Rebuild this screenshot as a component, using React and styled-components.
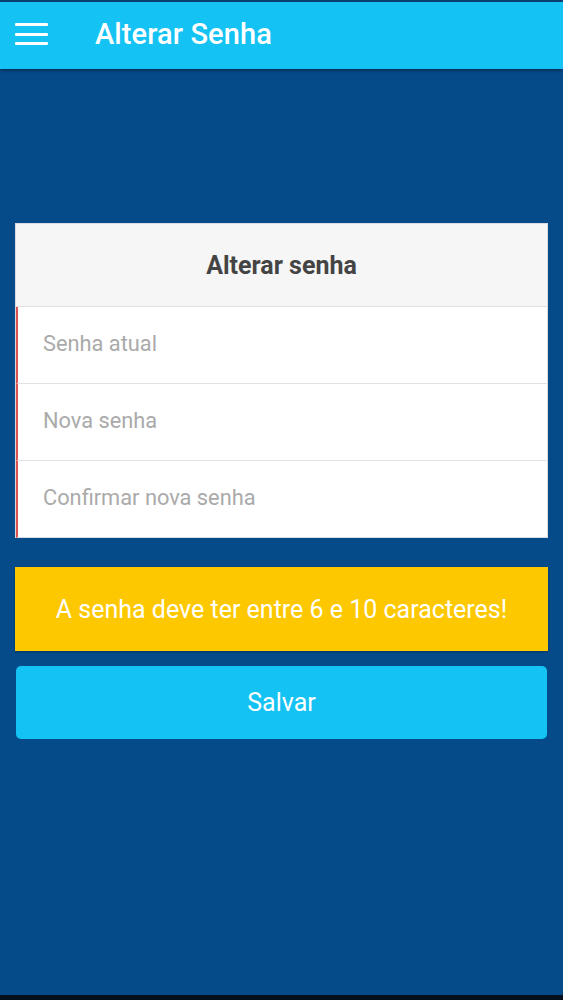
import React from "react";
import styled, { createGlobalStyle } from "styled-components";

const Global = createGlobalStyle`
  html, body { margin: 0; padding: 0; }
  body { font-family: Roboto, "Noto Sans", sans-serif; background: #000; }
  * { box-sizing: border-box; }
`;

const Screen = styled.div`
  width: 563px;
  height: 1000px;
  display: flex;
  flex-direction: column;
  background: #054b8a;
  border-top: 2px solid #0a3f6e;
  border-bottom: 5px solid #03101c;
`;

const Toolbar = styled.header`
  height: 67px;
  flex-shrink: 0;
  display: flex;
  align-items: center;
  padding: 0 15px 3px;
  background: #14c2f3;
  box-shadow: 0 2px 3px rgba(0, 0, 0, 0.35);
  gap: 47px;
`;

const MenuButton = styled.div`
  width: 33px;
  height: 22px;
  display: flex;
  flex-direction: column;
  justify-content: space-between;
`;

const MenuLine = styled.span`
  display: block;
  height: 3px;
  background: #fff;
  border-radius: 1px;
`;

const Title = styled.h1`
  margin: 0;
  color: #fff;
  font-size: 29px;
  font-weight: 500;
  letter-spacing: 0.1px;
`;

const Content = styled.main`
  padding: 154px 15px 0;
  display: flex;
  flex-direction: column;
`;

const Card = styled.section`
  background: #fff;
  border: 1px solid #d9dde2;
  border-bottom: none;
`;

const CardHeader = styled.div`
  height: 83px;
  display: flex;
  align-items: center;
  justify-content: center;
  background: #f6f6f6;
  border-bottom: 1px solid #e0e0e0;
  color: #444;
  font-size: 25px;
  font-weight: 700;
`;

const Field = styled.div`
  height: 77px;
  display: flex;
  align-items: center;
  padding: 0 0 3px 25px;
  border-left: 2px solid #d9534f;
  border-bottom: 1px solid ${(p) => (p.last ? "#d9dde2" : "#e2e2e2")};
  color: #aaa;
  font-size: 21.8px;
`;

const Alert = styled.div`
  margin-top: 29px;
  height: 84px;
  display: flex;
  align-items: center;
  justify-content: center;
  background: #fec800;
  color: #fff;
  font-size: 25px;
  box-shadow: 0 1px 2px rgba(0, 0, 0, 0.3);
`;

const SaveButton = styled.button`
  margin: 15px 1px 0;
  height: 73px;
  border: none;
  border-radius: 5px;
  background: #14c2f3;
  color: #fff;
  font-family: Roboto, "Noto Sans", sans-serif;
  font-size: 25px;
  cursor: pointer;
`;

export default function App() {
  return (
    <>
      <Global />
      <Screen>
        <Toolbar>
          <MenuButton>
            <MenuLine />
            <MenuLine />
            <MenuLine />
          </MenuButton>
          <Title>Alterar Senha</Title>
        </Toolbar>
        <Content>
          <Card>
            <CardHeader>Alterar senha</CardHeader>
            <Field>Senha atual</Field>
            <Field>Nova senha</Field>
            <Field last>Confirmar nova senha</Field>
          </Card>
          <Alert>A senha deve ter entre 6 e 10 caracteres!</Alert>
          <SaveButton>Salvar</SaveButton>
        </Content>
      </Screen>
    </>
  );
}
